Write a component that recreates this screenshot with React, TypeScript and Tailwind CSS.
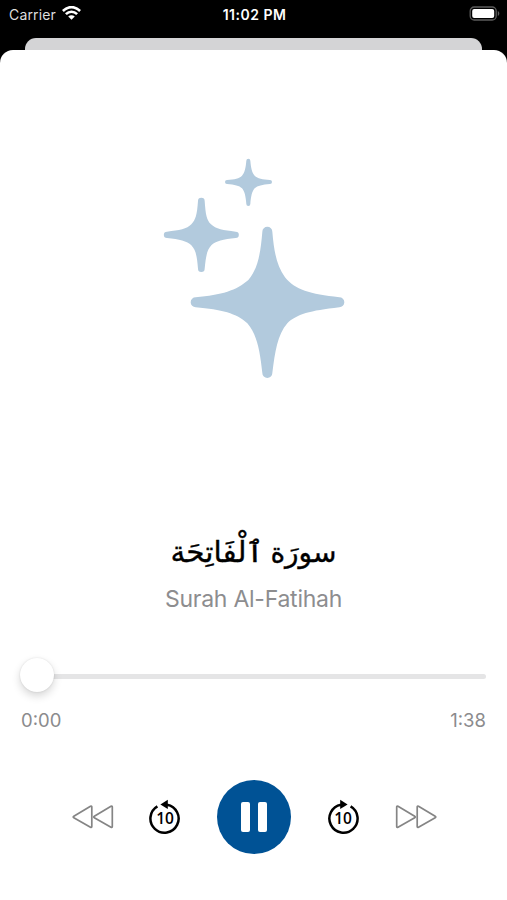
import React from "react";

function StatusBar() {
  return (
    <div className="grid h-[28px] grid-cols-3 items-center pl-[9px] pr-[7px] text-white">
      <div className="flex items-center gap-[6px]">
        <span className="text-[14px] tracking-[0.15px] text-[#dedede]">Carrier</span>
        <svg className="-mt-[2px]" width="19" height="14" viewBox="0 0 19 14" fill="none" stroke="#fff" strokeWidth="2.600">
          <path d="M.9 5C6-.2 13-.2 18.100 5" />
          <path d="M3.900 8.200c3.300-3.300 7.900-3.300 11.200 0" />
          <path d="M6.200 10.500c1.900-1.800 4.700-1.800 6.600 0L9.500 13.800z" fill="#fff" stroke="none" />
        </svg>
      </div>
      <span className="text-center text-[14px] font-semibold tracking-[0.5px] whitespace-nowrap">11:02 PM</span>
      <svg className="-mt-[2px] justify-self-end" width="31" height="15" viewBox="0 0 31 15">
        <rect x="1.200" y="1" width="26" height="13" rx="4" fill="#000" stroke="#5c5c5c" strokeWidth="1.300" />
        <rect x="3.200" y="3" width="22" height="9" rx="2" fill="#fff" />
        <path d="M28.800 5c2 .8 2 4.200 0 5z" fill="#5c5c5c" />
      </svg>
    </div>
  );
}

function Sparkles() {
  return (
    <svg width="210" height="245" viewBox="0 0 630 735" fill="#b2cadd">
      <path d="M337 260a15 15 0 0 1 30 0C372 320 380 362 405 397C435 435 480 447 568 457a15 15 0 0 1 0 30C480 497 440 508 412 535C382 570 375 620 367 684a15 15 0 0 1-30 0C330 620 322 570 292 535C260 505 215 494 137 487a15 15 0 0 1 0-30C215 450 260 436 295 405C325 370 332 320 337 260Z" />
      <path d="M144 168a10 10 0 0 1 20 0C167 210 170 225 183 238C197 252 220 256 257 260a9.500 9.500 0 0 1 0 19C220 283 197 288 184 301C171 315 168 332 164 371a10 10 0 0 1-20 0C141 332 137 315 124 301C111 288 88 283 51 279a9.500 9.500 0 0 1 0-19C88 256 111 252 124 238C137 224 141 210 144 168Z" />
      <path d="M289 47a6 6 0 0 1 12 0C303 70 306 83 314 92C323 101 337 103 360 105a6 6 0 0 1 0 12C337 119 323 122 314 130C306 139 303 154 301 177a6 6 0 0 1-12 0C287 154 284 139 276 130C268 122 254 119 231 117a6 6 0 0 1 0-12C254 103 268 101 276 92C284 83 287 70 289 47Z" />
    </svg>
  );
}

function Skip({ forward = false }: { forward?: boolean }) {
  return (
    <svg className={forward ? "-scale-x-100" : ""} width="42" height="26" viewBox="0 0 42 26" fill="none" stroke="#858585" strokeWidth="1.700" strokeLinejoin="round">
      <path d="M1.800 12.300 18.500 2.300q1.300-.7 1.300.7v19.500q0 1.400-1.300.7L1.800 13.700q-1.200-.7 0-1.400Z" />
      <path d="M22.300 12.300 39 2.300q1.300-.7 1.300.7v19.500q0 1.400-1.300.7L22.300 13.700q-1.200-.7 0-1.400Z" />
    </svg>
  );
}

function Seek({ forward = false }: { forward?: boolean }) {
  return (
    <button className="grid h-[36px] w-[32px] place-items-center" aria-label={forward ? "Forward 10 seconds" : "Back 10 seconds"}>
      <svg className={forward ? "col-start-1 row-start-1 -scale-x-100" : "col-start-1 row-start-1"} width="32" height="36" viewBox="0 0 32 36" fill="none">
        <path d="M8.400 7.400A14.100 14.100 0 1 0 18 5.700" stroke="#000" strokeWidth="2.500" />
        <path d="m11.400 5.600 7.400-4.900v9.400z" fill="#000" />
      </svg>
      <span className="col-start-1 row-start-1 pt-[4px] font-['Open_Sans',sans-serif] text-[15.500px] leading-none font-semibold text-black">10</span>
    </button>
  );
}

export default function App() {
  return (
    <div className="flex h-[900px] w-[507px] flex-col overflow-hidden bg-black font-[Inter,sans-serif]">
      <StatusBar />
      <div className="mx-[25px] mt-[10px] h-[12px] shrink-0 rounded-t-[11px] bg-[#d4d4d6]" />
      <main className="flex flex-1 flex-col rounded-t-[13px] bg-white">
        <div className="flex justify-center pt-[95px] pl-[2px]">
          <Sparkles />
        </div>
        <div className="mt-[143px] flex h-[86px] flex-col items-center">
          <h1 dir="rtl" lang="ar" className="flex h-[48px] items-baseline gap-[6px] text-[29.500px] leading-[38px] font-['DejaVu_Sans',sans-serif] whitespace-nowrap text-black [-webkit-text-stroke:0.35px_black]">
            <span className="text-[28px]">سورَة</span>
            <span>ٱلْفَاتِحَة</span>
          </h1>
          <p className="text-[23px] leading-[37px] tracking-[-0.25px] whitespace-nowrap text-[#8d8d8f]">Surah Al-Fatihah</p>
        </div>
        <div className="mt-[39px] flex h-[36px] items-center pl-[20px] pr-[21px]">
          <div className="z-10 -mt-[3px] size-[34px] rounded-full bg-white shadow-[0_4px_9px_rgba(0,0,0,0.16),0_0_2px_rgba(0,0,0,0.12)]" />
          <div className="-ml-1 h-[5px] flex-1 rounded-r-full bg-[#e5e5e6]" />
        </div>
        <div className="mt-[14px] flex justify-between px-[21px] text-[18.500px] leading-[24px] text-[#8b8b8d]">
          <span>0:00</span>
          <span>1:38</span>
        </div>
        <div className="mt-[48px] flex h-[74px] items-center pl-[72px]">
          <Skip />
          <div className="ml-[35px]"><Seek /></div>
          <button aria-label="Pause" className="ml-[36px] flex size-[74px] items-center justify-center gap-[8px] rounded-full bg-[#005295]">
            <span className="h-[30px] w-[9px] rounded-[2px] bg-white" />
            <span className="h-[30px] w-[9px] rounded-[2px] bg-white" />
          </button>
          <div className="ml-[36px]"><Seek forward /></div>
          <div className="ml-[36px]"><Skip forward /></div>
        </div>
      </main>
    </div>
  );
}
